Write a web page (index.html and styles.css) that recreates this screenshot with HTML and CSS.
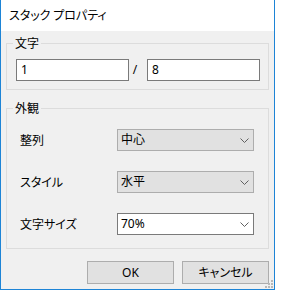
FILE: index.html
```html
<!DOCTYPE html>
<html lang="ja">
<head>
<meta charset="utf-8">
<link rel="stylesheet" href="styles.css">
</head>
<body>
<div class="window">
  <div class="titlebar">スタック プロパティ</div>
  <div class="client">
    <div class="group g1">
      <div class="legend">文字</div>
      <div class="pair">
        <div class="textbox">1</div>
        <div class="slash">/</div>
        <div class="textbox">8</div>
      </div>
    </div>
    <div class="group g2">
      <div class="legend">外観</div>
      <div class="row">
        <div class="label">整列</div>
        <div class="combo">中心<svg class="chev" width="9" height="5" viewBox="0 0 9 5"><polyline points="0.5,0.5 4.5,4.5 8.5,0.5" fill="none" stroke="#606060" stroke-width="1"/></svg></div>
      </div>
      <div class="row">
        <div class="label">スタイル</div>
        <div class="combo">水平<svg class="chev" width="9" height="5" viewBox="0 0 9 5"><polyline points="0.5,0.5 4.5,4.5 8.5,0.5" fill="none" stroke="#606060" stroke-width="1"/></svg></div>
      </div>
      <div class="row">
        <div class="label">文字サイズ</div>
        <div class="combo edit">70%<svg class="chev" width="9" height="5" viewBox="0 0 9 5"><polyline points="0.5,0.5 4.5,4.5 8.5,0.5" fill="none" stroke="#606060" stroke-width="1"/></svg></div>
      </div>
    </div>
    <div class="buttons">
      <div class="btn">OK</div>
      <div class="btn">キャンセル</div>
    </div>
    <svg class="grip" width="9" height="9" viewBox="0 0 9 9">
      <rect x="7" y="1" width="2" height="2" fill="#b8b8b8"/>
      <rect x="4" y="4" width="2" height="2" fill="#b8b8b8"/>
      <rect x="7" y="4" width="2" height="2" fill="#b8b8b8"/>
      <rect x="1" y="7" width="2" height="2" fill="#b8b8b8"/>
      <rect x="4" y="7" width="2" height="2" fill="#b8b8b8"/>
      <rect x="7" y="7" width="2" height="2" fill="#b8b8b8"/>
    </svg>
  </div>
</div>
</body>
</html>
```

FILE: styles.css
```css
html, body {
  margin: 0;
  padding: 0;
  background: #ffffff;
}
body {
  font-family: "Noto Sans", "Noto Sans CJK JP", sans-serif;
  font-size: 12px;
  font-weight: 400;
  color: #000;
  font-feature-settings: "palt";
}
.window {
  width: 273px;
  height: 289px;
  border: 1px solid #1d84d6;
  border-top: none;
  display: flex;
  flex-direction: column;
  background: #f0f0f0;
}
.titlebar {
  height: 31px;
  background: #ffffff;
  padding-left: 8px;
  line-height: 30px;
  font-size: 12px;
  color: #000;
  font-family: "Noto Sans CJK JP", sans-serif;
}
.client {
  flex: 1;
  position: relative;
  padding: 12px 5px 0 5px;
}
.group {
  border: 1px solid #dcdcdc;
}
.legend {
  display: table;
  background: #f0f0f0;
  line-height: 14px;
  height: 14px;
  padding: 0 2px;
  margin-top: -8px;
  font-family: "Noto Sans CJK JP", sans-serif;
}
.g1 {
  padding: 0 8px 8px 9px;
}
.g1 .legend {
  margin-left: -3px;
}
.pair {
  margin-top: 9px;
  display: flex;
}
.textbox {
  width: 107px;
  height: 20px;
  border: 1px solid #7a7a7a;
  background: #fff;
  padding-left: 4px;
  line-height: 20px;
}
.slash {
  width: 18px;
  text-align: center;
  line-height: 22px;
  padding-right: 6px;
  box-sizing: border-box;
}
.g2 {
  margin-top: 18px;
  padding: 0 0 13px 13px;
}
.g2 .legend {
  margin-left: -7px;
}
.row {
  display: grid;
  grid-template-columns: 97px 137px;
  margin-top: 20px;
  align-items: center;
}
.g2 .legend + .row {
  margin-top: 14px;
}
.label {
  font-family: "Noto Sans CJK JP", sans-serif;
  line-height: 22px;
}
.combo {
  box-sizing: border-box;
  height: 22px;
  border: 1px solid #adadad;
  background: #e1e1e1;
  padding-left: 3px;
  line-height: 20px;
  display: flex;
  justify-content: space-between;
  align-items: center;
  padding-right: 4px;
}
.combo.edit {
  background: #ffffff;
  border-color: #7a7a7a;
}
.chev {
  display: block;
}
.buttons {
  margin-top: 12px;
  display: flex;
  justify-content: flex-end;
  gap: 8px;
}
.btn {
  box-sizing: border-box;
  width: 87px;
  height: 23px;
  border: 1px solid #adadad;
  background: #e1e1e1;
  text-align: center;
  line-height: 21px;
}
.grip {
  position: absolute;
  right: 1px;
  bottom: 1px;
}
```
